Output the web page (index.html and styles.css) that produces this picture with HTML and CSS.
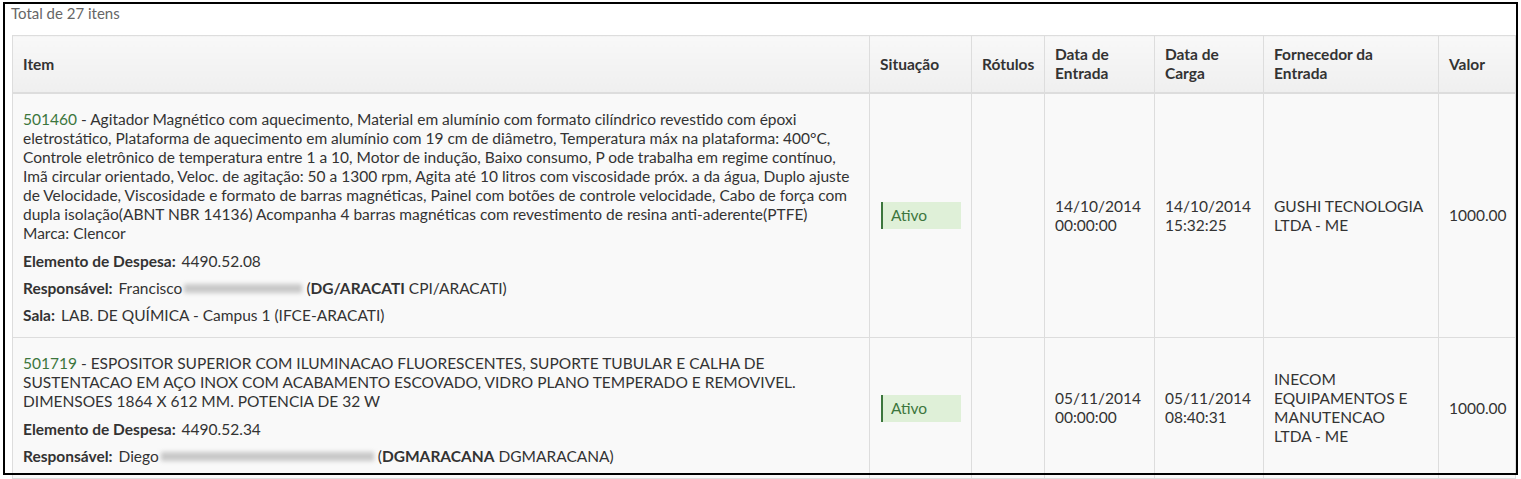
FILE: index.html
```html
<!DOCTYPE html>
<html lang="pt-BR">
<head>
<meta charset="utf-8">
<title>Itens</title>
<link rel="stylesheet" href="styles.css">
</head>
<body>
<div class="page">
  <div class="total">Total de 27 itens</div>
  <table class="items">
    <colgroup>
      <col class="c-item"><col class="c-sit"><col class="c-rot"><col class="c-dent"><col class="c-dcar"><col class="c-forn"><col class="c-val">
    </colgroup>
    <thead>
      <tr>
        <th>Item</th>
        <th>Situação</th>
        <th>Rótulos</th>
        <th>Data de<br>Entrada</th>
        <th>Data de<br>Carga</th>
        <th>Fornecedor da<br>Entrada</th>
        <th>Valor</th>
      </tr>
    </thead>
    <tbody>
      <tr>
        <td class="item">
          <p class="desc"><span class="code">501460</span> - Agitador Magnético com aquecimento, Material em alumínio com formato cilíndrico revestido com époxi eletrostático, Plataforma de aquecimento em alumínio com 19 cm de diâmetro, Temperatura máx na plataforma: 400°C, Controle eletrônico de temperatura entre 1 a 10, Motor de indução, Baixo consumo, P ode trabalha em regime contínuo, Imã circular orientado, Veloc. de agitação: 50 a 1300 rpm, Agita até 10 litros com viscosidade próx. a da água, Duplo ajuste de Velocidade, Viscosidade e formato de barras magnéticas, Painel com botões de controle velocidade, Cabo de força com dupla isolação(ABNT NBR 14136) Acompanha 4 barras magnéticas com revestimento de resina anti-aderente(PTFE)<br>Marca: Clencor</p>
          <p class="field"><b class="label">Elemento de Despesa:</b> 4490.52.08</p>
          <p class="field"><b class="label">Responsável:</b> Francisco<span class="blur b1"></span>(<b>DG/ARACATI</b> CPI/ARACATI)</p>
          <p class="field"><b class="label">Sala:</b> LAB. DE QUÍMICA - Campus 1 (IFCE-ARACATI)</p>
        </td>
        <td><span class="badge">Ativo</span></td>
        <td></td>
        <td>14/10/2014<br>00:00:00</td>
        <td>14/10/2014<br>15:32:25</td>
        <td>GUSHI TECNOLOGIA<br>LTDA - ME</td>
        <td>1000.00</td>
      </tr>
      <tr>
        <td class="item">
          <p class="desc"><span class="code">501719</span> - ESPOSITOR SUPERIOR COM ILUMINACAO FLUORESCENTES, SUPORTE TUBULAR E CALHA DE SUSTENTACAO EM AÇO INOX COM ACABAMENTO ESCOVADO, VIDRO PLANO TEMPERADO E REMOVIVEL. DIMENSOES 1864 X 612 MM. POTENCIA DE 32 W</p>
          <p class="field"><b class="label">Elemento de Despesa:</b> 4490.52.34</p>
          <p class="field"><b class="label">Responsável:</b> Diego<span class="blur b2"></span>(<b>DGMARACANA</b> DGMARACANA)</p>
        </td>
        <td><span class="badge">Ativo</span></td>
        <td></td>
        <td>05/11/2014<br>00:00:00</td>
        <td>05/11/2014<br>08:40:31</td>
        <td>INECOM<br>EQUIPAMENTOS E<br>MANUTENCAO<br>LTDA - ME</td>
        <td>1000.00</td>
      </tr>
    </tbody>
  </table>
  <div class="frame"></div>
</div>
</body>
</html>
```
FILE: styles.css
```css
html, body {
  margin: 0;
  padding: 0;
  background: #fff;
  overflow: hidden;
}
body {
  font-family: Lato, "Open Sans", sans-serif;
  font-size: 15.5px;
  color: #333;
  width: 1521px;
  height: 479px;
}
.page {
  position: relative;
  padding: 3px 6px 0 12px;
  height: 476px;
  overflow: hidden;
}
.total {
  font-size: 15px;
  line-height: 20px;
  color: #666;
  margin-left: -1px;
  margin-bottom: 12px;
}
.items {
  border-collapse: collapse;
  table-layout: fixed;
  width: 1503px;
  border: 1px solid #ddd;
}
.c-item { width: 857px; }
.c-sit { width: 102px; }
.c-rot { width: 73px; }
.c-dent { width: 110px; }
.c-dcar { width: 109px; }
.c-forn { width: 175px; }
.c-val { width: 77px; }
.items th {
  text-align: left;
  font-weight: 700;
  font-size: 15.5px;
  line-height: 19px;
  padding: 9px 10px 9px 10px;
  height: 38px;
  border: 1px solid #ddd;
  border-bottom-width: 2px;
  background: linear-gradient(#f8f8f8, #efefef);
  vertical-align: middle;
  white-space: nowrap;
}
.items td {
  background: #f9f9f9;
  border: 1px solid #ddd;
  padding: 8px 10px;
  line-height: 19px;
  vertical-align: middle;
}
.items td.item {
  padding: 16px 10px 12px 10px;
  vertical-align: top;
}
.desc {
  margin: 0 0 9px 0;
}
.field {
  margin: 0 0 8px 0;
}
.field .label {
  margin-right: 2px;
}
.field:last-child {
  margin-bottom: 0;
}
.code {
  color: #3c763d;
}
.blur {
  display: inline-block;
  height: 9px;
  vertical-align: 1px;
  background: #c8c8c8;
  filter: blur(2px);
  margin: 0 4px 0 2px;
}
.b1 { width: 118px; }
.b2 { width: 213px; }
.badge {
  display: block;
  width: 80px;
  height: 27px;
  line-height: 27px;
  box-sizing: border-box;
  padding-left: 8px;
  margin-left: 1px;
  background: #dff0d8;
  border-left: 2px solid #3c763d;
  color: #3c763d;
}
.frame {
  position: absolute;
  left: 3px;
  top: 2px;
  width: 1511px;
  height: 469px;
  border: 2px solid #000;
  pointer-events: none;
}
```
